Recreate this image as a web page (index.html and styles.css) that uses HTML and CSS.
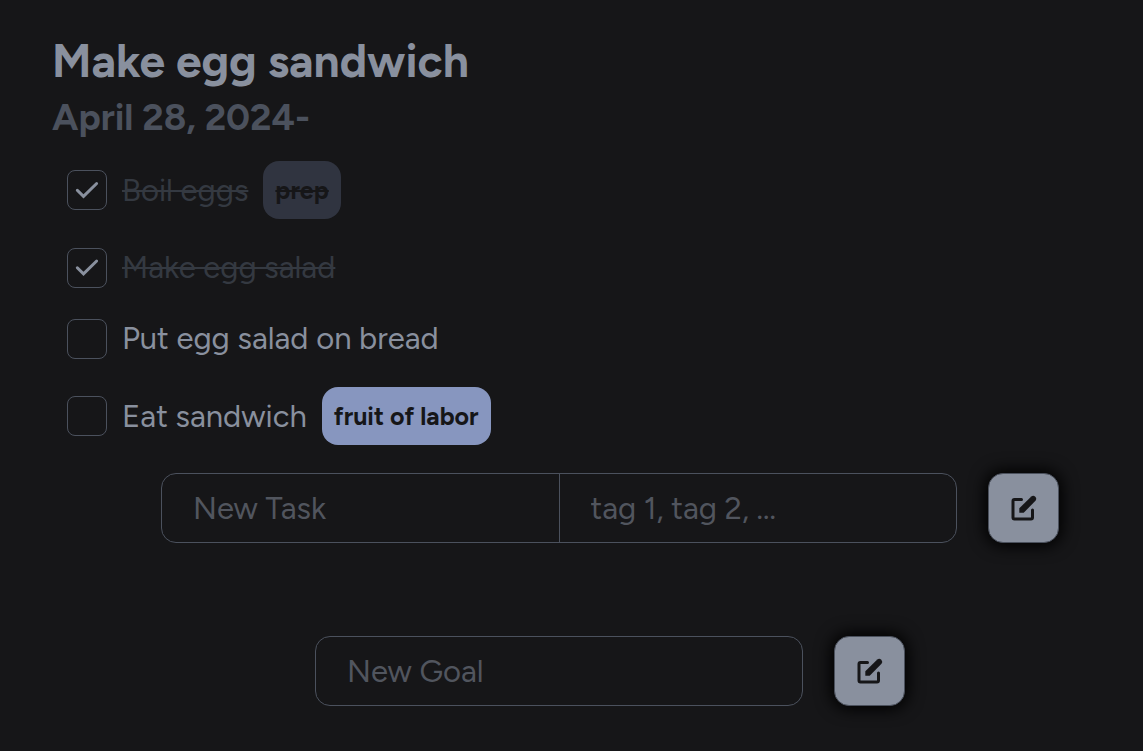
FILE: index.html
```html
<!DOCTYPE html>
<html lang="en">
<head>
<meta charset="utf-8">
<meta name="viewport" content="width=device-width, initial-scale=1">
<title>Goals</title>
<link rel="stylesheet" href="styles.css">
</head>
<body>
<main class="page">
  <section class="goal">
    <h1 class="goal-title">Make egg sandwich</h1>
    <h2 class="goal-date">April 28, 2024-</h2>
    <ul class="tasks">
      <li class="task done">
        <input class="check" type="checkbox" id="t1" checked>
        <label class="task-name" for="t1">Boil eggs</label>
        <span class="tag">prep</span>
      </li>
      <li class="task done">
        <input class="check" type="checkbox" id="t2" checked>
        <label class="task-name" for="t2">Make egg salad</label>
      </li>
      <li class="task">
        <input class="check" type="checkbox" id="t3">
        <label class="task-name" for="t3">Put egg salad on bread</label>
      </li>
      <li class="task">
        <input class="check" type="checkbox" id="t4">
        <label class="task-name" for="t4">Eat sandwich</label>
        <span class="tag">fruit of labor</span>
      </li>
    </ul>
  </section>
  <div class="entries">
    <form class="entry entry-task">
      <div class="fields">
        <input class="field" type="text" placeholder="New Task" aria-label="New Task">
        <input class="field" type="text" placeholder="tag 1, tag 2, ..." aria-label="Tags">
      </div>
      <button class="submit" type="button" aria-label="Add task">
        <svg class="icon" viewBox="0 0 26 26"><path class="frame" d="M10.500 4.500H3.500Q2 4.500 2 6V22.500Q2 24 3.500 24H20Q21.500 24 21.500 22.500V15"/><path class="pen" d="M8.300 17.700V13.300L20.300 1.500Q22.400 0 24.300 1.700Q26 3.700 24.500 5.800L12.700 17.700Z"/></svg>
      </button>
    </form>
    <form class="entry entry-goal">
      <div class="fields">
        <input class="field" type="text" placeholder="New Goal" aria-label="New Goal">
      </div>
      <button class="submit" type="button" aria-label="Add goal">
        <svg class="icon" viewBox="0 0 26 26"><path class="frame" d="M10.500 4.500H3.500Q2 4.500 2 6V22.500Q2 24 3.500 24H20Q21.500 24 21.500 22.500V15"/><path class="pen" d="M8.300 17.700V13.300L20.300 1.500Q22.400 0 24.300 1.700Q26 3.700 24.500 5.800L12.700 17.700Z"/></svg>
      </button>
    </form>
  </div>
</main>
</body>
</html>
```
FILE: styles.css
```css
* {
  box-sizing: border-box;
}

body {
  margin: 0;
  background: #161618;
  color: #89909e;
  font-family: Figtree, Lato, sans-serif;
  font-size: 31px;
}

.page {
  padding: 32px 0 40px;
}

.goal {
  padding: 0 52px;
}

.goal-title {
  margin: 0;
  font-size: 46px;
  line-height: 58px;
  font-weight: 700;
}

.goal-date {
  margin: 0;
  font-size: 37px;
  line-height: 54px;
  font-weight: 700;
  color: #4b515d;
}

.tasks {
  display: flex;
  flex-direction: column;
  gap: 26px;
  margin: 17px 0 0;
  padding: 0 15px;
  list-style: none;
}

.task {
  display: flex;
  align-items: center;
  gap: 15px;
  min-height: 45px;
}

.check {
  appearance: none;
  flex: none;
  display: grid;
  place-items: center;
  width: 40px;
  height: 40px;
  margin: 0;
  border: 1px solid #4b515d;
  border-radius: 8px;
}

.check:checked::after {
  content: "";
  width: 24px;
  height: 18px;
  background: #89909e;
  clip-path: path("M1.200 10.200Q.3 9.200 1.200 8.200Q2.300 7.300 3.400 8.200L8.500 13.300L20.600 1.400Q21.700 .5 22.700 1.500Q23.600 2.500 22.700 3.500L8.500 17.400Z");
}

.done .task-name {
  color: #343941;
  text-decoration: line-through 2px;
}

.tag {
  padding: 0 12px;
  border-radius: 16px;
  background: #8796bf;
  color: #161618;
  font-size: 25px;
  line-height: 58px;
  font-weight: 700;
}

.done .tag {
  background: #303440;
  text-decoration: line-through 2px;
}

.entries {
  display: flex;
  flex-direction: column;
  align-items: center;
  gap: 93px;
  margin-top: 28px;
  padding: 0 84px 0 161px;
}

.entry {
  display: flex;
  gap: 31px;
  width: 100%;
}

.entry-goal {
  max-width: 590px;
}

.fields {
  flex: 1;
  display: flex;
  min-width: 0;
  height: 70px;
  border: 1px solid #4b515d;
  border-radius: 15px;
}

.field {
  flex: 1;
  min-width: 0;
  padding: 0 31px;
  border: 0;
  background: transparent;
  color: #89909e;
  font: inherit;
  outline: none;
}

.field + .field {
  border-left: 1px solid #4b515d;
}

.field::placeholder {
  color: #51555e;
  opacity: 1;
}

.submit {
  flex: none;
  display: grid;
  place-items: center;
  width: 71px;
  height: 70px;
  padding: 0;
  border: 1px solid #4b515d;
  border-radius: 15px;
  background: #89909e;
  box-shadow: 0 0 16px 3px #000;
}

.icon {
  width: 26px;
  height: 26px;
}

.frame {
  fill: none;
  stroke: #161618;
  stroke-width: 3;
  stroke-linecap: round;
}

.pen {
  fill: #161618;
}
```
